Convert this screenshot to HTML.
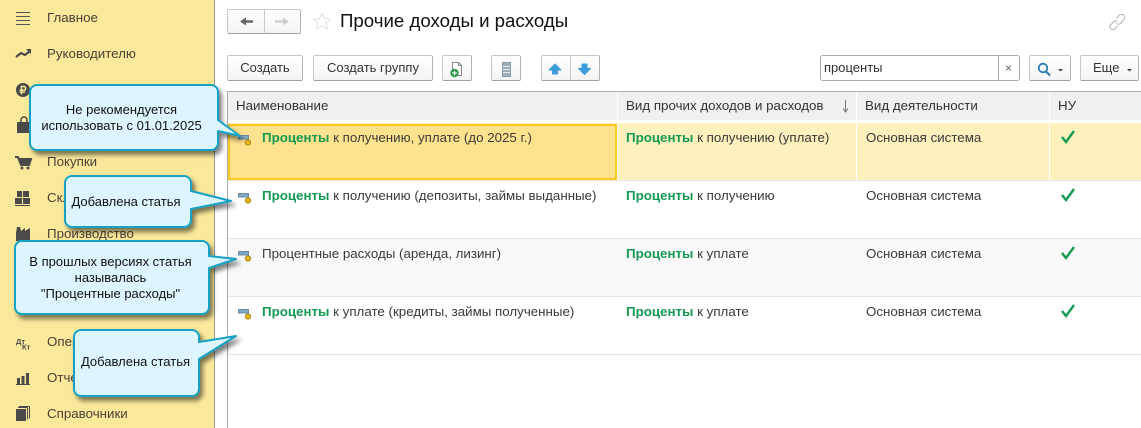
<!DOCTYPE html>
<html><head><meta charset="utf-8">
<style>
*{box-sizing:border-box}
html,body{margin:0;padding:0;width:1141px;height:428px;overflow:hidden;background:#fff;font-family:"Liberation Sans",sans-serif;font-size:13.33px;color:#3a3a3a}
.a{position:absolute;white-space:nowrap}
#side{position:absolute;left:0;top:0;width:215px;height:428px;background:#FBE99B;border-right:1px solid #9a9a9a}
.m{position:absolute;left:47px;font-size:13.33px;line-height:16px;color:#4a4038;white-space:nowrap}
.b{position:absolute;height:26px;background:linear-gradient(#fff,#f4f4f4);border:1px solid #c8c8c8;border-bottom:1px solid #a0a0a0;border-right-color:#b4b4b4;border-radius:2px;text-align:center;line-height:24px;font-size:13px;color:#333}
.h{position:absolute;top:92px;height:28px;background:#f0f0f0;line-height:28px;padding-left:8px;font-size:13.33px;color:#333}
.r{position:absolute;left:228px;width:913px;height:58px;border-bottom:1px solid #e4e4e4}
.t{position:absolute;font-size:13.33px;line-height:14px;white-space:nowrap;color:#3a3a3a}
.t b{color:#149a53;font-weight:bold}
.c{position:absolute;font-size:13px;line-height:16px;color:#111;text-align:center;white-space:nowrap}
</style></head><body>

<div id="side"></div>
<div class="m" style="top:10px">Главное</div>
<div class="m" style="top:46px">Руководителю</div>
<div class="m" style="top:154px">Покупки</div>
<div class="m" style="top:190px">Склад</div>
<div class="m" style="top:226px">Производство</div>
<div class="m" style="top:334px">Операции</div>
<div class="m" style="top:370px">Отчеты</div>
<div class="m" style="top:406px">Справочники</div>

<svg class="a" style="left:0;top:0" width="214" height="428" fill="#4a4a4a">
<path d="M16 12.500h14M16 16.500h14M16 20.500h14M16 24.500h14" stroke="#555" fill="none"/>
<path d="M16 57l5-4 4 2 5-4" stroke="#4a4a4a" stroke-width="2.200" fill="none"/><path d="M26 49h5v5z"/>
<circle cx="23" cy="90" r="7"/>
<text x="19.500" y="94" font-size="11" font-weight="bold" fill="#FBE99B" font-family="Liberation Sans">₽</text>
<path d="M17 122h14v11H17z"/><path d="M21 122v-2a3 3 0 0 1 6 0v2" stroke="#4a4a4a" fill="none" stroke-width="1.500"/>
<path d="M15 157h3l3 8h8l2-6H19" stroke="#4a4a4a" stroke-width="2" fill="#4a4a4a"/><circle cx="22" cy="168" r="1.500"/><circle cx="28" cy="168" r="1.500"/>
<path d="M17 191h5v6h-5zM23 191h6v6h-6zM15 198h7v6h-7zM23 198h7v6h-7z"/><path d="M15 205h15v1H15z"/>
<path d="M16 241v-8l1-6h3l1 4 4-3v3l5-3v13z"/>
<text x="16" y="344" font-size="7.500" font-weight="bold" font-family="Liberation Sans">Дт</text>
<text x="22" y="349.500" font-size="7.500" font-weight="bold" font-family="Liberation Sans">Кт</text>
<path d="M17 378h3v6h-3zM21.500 376h3v8h-3zM26 373h3v11h-3zM16 384h14v1H16z"/>
<path d="M16 409h10v12H16z"/><path d="M27.500 407.500v12M29.500 406.500v12M18 407.500h9.500M19 406.500h10.500" stroke="#4a4a4a" fill="none"/>
</svg>

<!-- Nav -->
<div class="b" style="left:227px;top:9px;width:38px;height:25px;border-radius:2px 0 0 2px"></div>
<div class="b" style="left:264px;top:9px;width:37px;height:25px;border-radius:0 2px 2px 0"></div>
<svg class="a" style="left:225px;top:0" width="110" height="40">
<path d="M19 21.500h9" stroke="#666" stroke-width="2.500"/><path d="M15 21.500l6-4v8z" fill="#666"/>
<path d="M50 21.500h9" stroke="#cfcfcf" stroke-width="2.500"/><path d="M64 21.500l-6-4v8z" fill="#cfcfcf"/>
<path d="M97 13l2.400 5.600 6.100.5-4.600 4 1.400 6-5.300-3.200-5.300 3.200 1.400-6-4.600-4 6.100-.5z" fill="#fff" stroke="#e2e2e2"/>
</svg>
<div class="a" style="left:340px;top:10px;font-size:18.670px;line-height:22px;color:#111">Прочие доходы и расходы</div>
<svg class="a" style="left:1105px;top:12px" width="24" height="20" fill="none" stroke="#b0b0b0" stroke-width="1">
<path d="M11.500 6.500l2.500-3a3 3 0 0 1 5 4l-3.500 4a3 3 0 0 1-4 0"/><path d="M12.500 9.500a3 3 0 0 0-3.500 0l-4 4a3 3 0 0 0 4.500 3.500l3-3"/>
</svg>

<!-- Toolbar -->
<div class="b" style="left:227px;top:55px;width:76px">Создать</div>
<div class="b" style="left:313px;top:55px;width:120px">Создать группу</div>
<div class="b" style="left:442px;top:55px;width:30px"></div>
<div class="b" style="left:491px;top:55px;width:30px"></div>
<div class="b" style="left:541px;top:55px;width:30px;border-radius:2px 0 0 2px"></div>
<div class="b" style="left:570px;top:55px;width:30px;border-radius:0 2px 2px 0"></div>
<svg class="a" style="left:440px;top:55px" width="165" height="26">
<path d="M12.500 7.500h6l3 3v10h-9z" fill="#fff" stroke="#888"/><path d="M18.500 7.500v3h3" fill="none" stroke="#888"/>
<circle cx="14.500" cy="18" r="4.200" fill="#2a9a4a"/><path d="M12.200 18h4.600M14.500 15.700v4.600" stroke="#fff" stroke-width="1.300"/>
<rect x="62.500" y="7.500" width="8" height="14" fill="#9fb0ba" stroke="#8a9ba6"/><path d="M63 11.500h7M63 14.500h7M63 17.500h7" stroke="#e4eaee"/>
<path d="M115 9l6 6h-3.500v4h-5v-4H109z" fill="#3d9ddc" stroke="#3d9ddc" stroke-linejoin="round"/>
<path d="M144.500 19.500l6-6H147V9h-5v4.500h-3.500z" fill="#3d9ddc" stroke="#3d9ddc" stroke-linejoin="round"/>
</svg>

<!-- Search -->
<div class="a" style="left:820px;top:55px;width:200px;height:26px;background:#fff;border:1px solid #aaa;border-radius:3px"></div>
<div class="a" style="left:998px;top:56px;width:1px;height:24px;background:#aaa"></div>
<div class="a" style="left:824px;top:61px;font-size:13px;line-height:14px;color:#333">проценты</div>
<div class="a" style="left:1005px;top:61px;font-size:12px;line-height:14px;color:#666">×</div>
<div class="b" style="left:1029px;top:55px;width:42px"></div>
<div class="b" style="left:1080px;top:55px;width:59px;text-align:left;padding-left:12px">Еще</div>
<svg class="a" style="left:1029px;top:55px" width="112" height="26">
<circle cx="14" cy="13" r="4.300" fill="none" stroke="#2f7fb0" stroke-width="1.800"/><path d="M17 16.500l4 4" stroke="#2f7fb0" stroke-width="2.200"/>
<path d="M29 14h5l-2.500 2.500zM98 14h5l-2.500 2.500z" fill="#444"/>
</svg>

<!-- Table -->
<div class="a" style="left:228px;top:91px;width:913px;height:1px;background:#aaa"></div>
<div class="a" style="left:227px;top:91px;width:1px;height:337px;background:#aaa"></div>
<div class="h" style="left:228px;width:389px">Наименование</div>
<div class="h" style="left:618px;width:238px">Вид прочих доходов и расходов</div>
<div class="h" style="left:857px;width:192px">Вид деятельности</div>
<div class="h" style="left:1050px;width:91px">НУ</div>
<svg class="a" style="left:838px;top:98px" width="14" height="16"><path d="M7.500 2v11" stroke="#777"/><path d="M5 10.500L7.500 14l2.500-3.500" stroke="#777" fill="none"/></svg>

<div class="a" style="left:228px;top:123px;width:913px;height:58px;background:#FEF1BE;border-bottom:1px solid #e4e4e4"></div>
<div class="a" style="left:228px;top:124px;width:389px;height:56px;background:#FEE28E;border:2px solid #FCC71E"></div>
<div class="a" style="left:617px;top:123px;width:1px;height:57px;background:#fff"></div>
<div class="a" style="left:856px;top:123px;width:1px;height:57px;background:#fff"></div>
<div class="a" style="left:1049px;top:123px;width:1px;height:57px;background:#fff"></div>
<div class="r" style="top:181px;background:#fff"></div>
<div class="r" style="top:239px;background:#f9f9f9"></div>
<div class="r" style="top:297px;background:#fff"></div>

<div class="t" style="left:262px;top:131px"><b>Проценты</b> к получению, уплате (до 2025 г.)</div>
<div class="t" style="left:626px;top:131px"><b>Проценты</b> к получению (уплате)</div>
<div class="t" style="left:866px;top:131px">Основная система</div>
<div class="t" style="left:262px;top:189px"><b>Проценты</b> к получению (депозиты, займы выданные)</div>
<div class="t" style="left:626px;top:189px"><b>Проценты</b> к получению</div>
<div class="t" style="left:866px;top:189px">Основная система</div>
<div class="t" style="left:262px;top:247px">Процентные расходы (аренда, лизинг)</div>
<div class="t" style="left:626px;top:247px"><b>Проценты</b> к уплате</div>
<div class="t" style="left:866px;top:247px">Основная система</div>
<div class="t" style="left:262px;top:305px"><b>Проценты</b> к уплате (кредиты, займы полученные)</div>
<div class="t" style="left:626px;top:305px"><b>Проценты</b> к уплате</div>
<div class="t" style="left:866px;top:305px">Основная система</div>

<svg class="a" style="left:0;top:0" width="1141" height="428">
<defs>
<g id="ic"><rect x="238.500" y="0.500" width="10" height="3.500" fill="#7fa8c4" stroke="#6a8ba3"/><circle cx="248" cy="7.500" r="2.600" fill="#E8B81E" stroke="#a8860f"/></g>
<path id="ck" d="M1062 137l4 5 8-11" fill="none" stroke="#149a53" stroke-width="2.400"/>
<filter id="s" x="-10%" y="-10%" width="125%" height="130%"><feDropShadow dx="3" dy="4" stdDeviation="2.500" flood-color="#000" flood-opacity=".5"/></filter>
</defs>
<use href="#ic" y="135"/><use href="#ic" y="193"/><use href="#ic" y="251"/><use href="#ic" y="309"/>
<use href="#ck"/><use href="#ck" y="58"/><use href="#ck" y="116"/><use href="#ck" y="174"/>
<g fill="#DDF5FF" stroke="#17A2C4" stroke-width="2" stroke-linejoin="round" filter="url(#s)">
<path d="M37 85H211a7 7 0 0 1 7 7V120L240 136 218 131V143a7 7 0 0 1-7 7H37a7 7 0 0 1-7-7V92a7 7 0 0 1 7-7z"/>
<path d="M72 176H184a7 7 0 0 1 7 7V191L231 201 191 209V220a7 7 0 0 1-7 7H72a7 7 0 0 1-7-7V183a7 7 0 0 1 7-7z"/>
<path d="M23 241H202a7 7 0 0 1 7 7V256L236 259 209 268V307a7 7 0 0 1-7 7H23a7 7 0 0 1-8-7V248a7 7 0 0 1 8-7z"/>
<path d="M81 330H192a7 7 0 0 1 7 7V342L236 336 199 359V389a7 7 0 0 1-7 7H81a7 7 0 0 1-7-7V337a7 7 0 0 1 7-7z"/>
</g>
</svg>
<div class="c" style="left:25px;width:193px;top:102px;line-height:15.500px">Не рекомендуется<br>использовать с 01.01.2025</div>
<div class="c" style="left:61px;width:130px;top:194px">Добавлена статья</div>
<div class="c" style="left:12px;width:197px;top:254px">В прошлых версиях статья<br>называлась<br>"Процентные расходы"</div>
<div class="c" style="left:72px;width:127px;top:354px">Добавлена статья</div>
</body></html>
